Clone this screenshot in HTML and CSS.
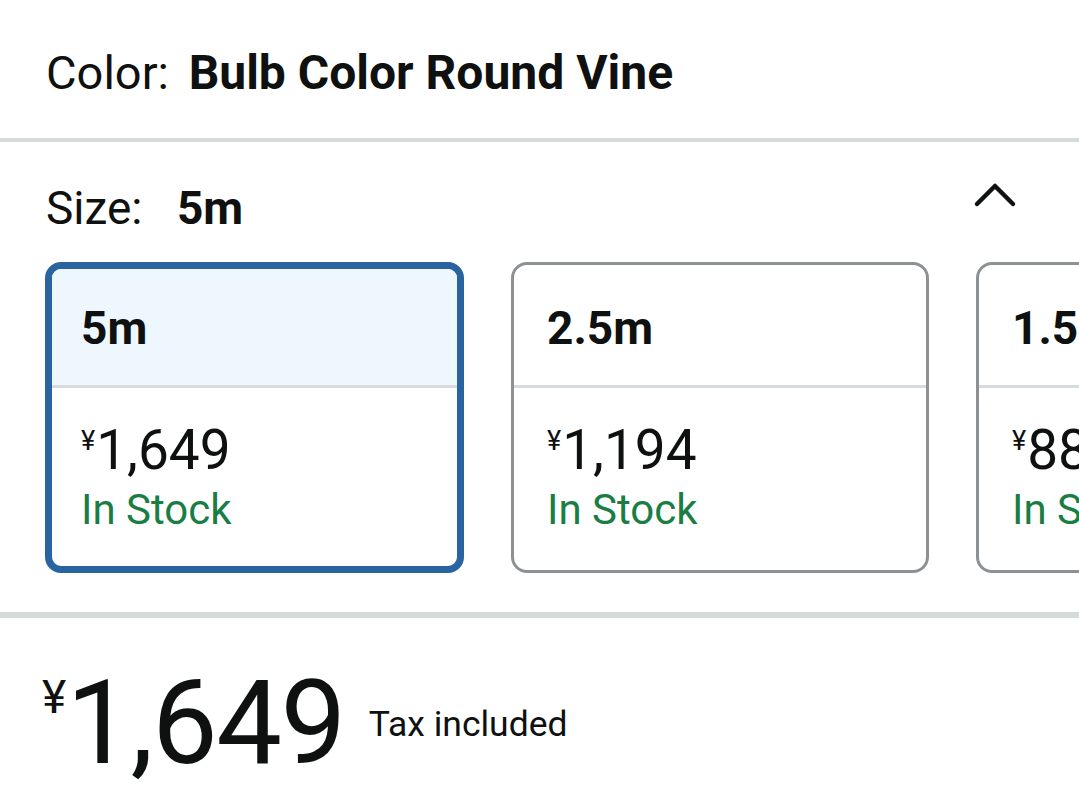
FILE: index.html
```html
<!DOCTYPE html>
<html lang="en">
<head>
<meta charset="utf-8">
<title>Size selector</title>
<link rel="stylesheet" href="styles.css">
</head>
<body>
<div class="page">
  <section class="color-row">
    <span class="label">Color:</span>
    <span class="value">Bulb Color Round Vine</span>
  </section>
  <div class="divider thin"></div>
  <section class="size-section">
    <div class="size-head">
      <div class="size-title">
        <span class="label">Size:</span>
        <span class="value">5m</span>
      </div>
      <svg class="chevron" width="44" height="28" viewBox="0 0 44 28" aria-hidden="true">
        <path d="M4 23 L22 5 L40 23" fill="none" stroke="#0f1111" stroke-width="4.5" stroke-linecap="round" stroke-linejoin="round"/>
      </svg>
    </div>
    <div class="cards">
      <div class="card selected">
        <div class="card-head">5m</div>
        <div class="card-body">
          <div class="price"><span class="yen">¥</span>1,649</div>
          <div class="stock">In Stock</div>
        </div>
      </div>
      <div class="card">
        <div class="card-head">2.5m</div>
        <div class="card-body">
          <div class="price"><span class="yen">¥</span>1,194</div>
          <div class="stock">In Stock</div>
        </div>
      </div>
      <div class="card">
        <div class="card-head">1.5m</div>
        <div class="card-body">
          <div class="price"><span class="yen">¥</span>880</div>
          <div class="stock">In Stock</div>
        </div>
      </div>
    </div>
  </section>
  <div class="divider thick"></div>
  <section class="total">
    <span class="big-yen">¥</span><span class="big-price">1,649</span>
    <span class="tax">Tax included</span>
  </section>
</div>
</body>
</html>
```

FILE: styles.css
```css
html, body {
  margin: 0;
  padding: 0;
  background: #ffffff;
}
body {
  font-family: Roboto, "Noto Sans", "Liberation Sans", sans-serif;
  color: #0f1111;
  width: 1079px;
  height: 803px;
  overflow: hidden;
}
.page {
  width: 1079px;
}
.color-row {
  height: 138px;
  box-sizing: border-box;
  padding: 45px 0 0 46px;
  font-size: 47px;
  line-height: 56px;
  white-space: nowrap;
}
.color-row .label {
  margin-right: 8px;
}
.color-row .value {
  font-size: 48px;
}
.value {
  font-weight: 700;
}
.divider {
  background: #d5dbdb;
}
.divider.thin {
  height: 4px;
}
.divider.thick {
  height: 6px;
}
.size-section {
  padding: 38px 0 39px 45px;
  overflow: hidden;
}
.size-head {
  display: flex;
  justify-content: space-between;
  align-items: center;
  padding: 0 62px 0 1px;
  height: 56px;
}
.size-title {
  font-size: 46px;
  line-height: 56px;
  white-space: nowrap;
}
.size-title .label {
  margin-right: 23px;
}
.chevron {
  display: block;
  margin-top: -27px;
}
.cards {
  display: flex;
  gap: 47px;
  margin-top: 26px;
  width: 1400px;
}
.card {
  flex: 0 0 auto;
  width: 418px;
  height: 311px;
  box-sizing: border-box;
  border: 3px solid #8e9193;
  border-radius: 16px;
  overflow: hidden;
  display: flex;
  flex-direction: column;
}
.card.selected {
  width: 419px;
  border: 7px solid #2a64a0;
  background: #ffffff;
}
.card-head {
  height: 123px;
  box-sizing: border-box;
  border-bottom: 3px solid #d5dbdf;
  padding: 38px 0 0 33px;
  font-size: 46px;
  font-weight: 700;
  line-height: 50px;
}
.card.selected .card-head {
  background: #eef7fd;
  padding: 34px 0 0 29px;
  height: 119px;
}
.card-body {
  padding: 31px 0 0 33px;
}
.card.selected .card-body {
  padding-left: 29px;
}
.price {
  font-size: 55px;
  line-height: 62px;
  white-space: nowrap;
}
.yen {
  font-size: 27px;
  vertical-align: top;
  position: relative;
  top: -9px;
  margin-right: 1px;
}
.stock {
  color: #1a7d45;
  font-size: 42px;
  line-height: 50px;
  margin-top: 4px;
  white-space: nowrap;
}
.total {
  padding: 38px 0 0 42px;
  display: flex;
  align-items: flex-start;
  white-space: nowrap;
}
.big-yen {
  font-size: 46px;
  line-height: 50px;
  margin-top: 16px;
  margin-right: 0;
}
.big-price {
  font-size: 117px;
  line-height: 134px;
  letter-spacing: -1.5px;
}
.tax {
  font-size: 35.5px;
  line-height: 44px;
  margin-left: 24px;
  margin-top: 46px;
}
```
